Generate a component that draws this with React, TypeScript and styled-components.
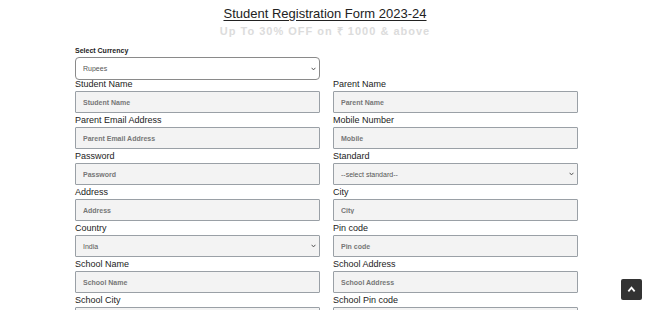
import React from "react";
import styled, { createGlobalStyle } from "styled-components";

const Global = createGlobalStyle`
  html, body { margin: 0; padding: 0; background: #fff; }
  body { font-family: "Liberation Sans", Arial, sans-serif; color: #222; }
`;

const Page = styled.div`
  padding-top: 6px;
`;

const Title = styled.h1`
  margin: 0;
  text-align: center;
  font-size: 13px;
  font-weight: 400;
  line-height: 15px;
  text-decoration: underline;
  text-underline-offset: 2px;
  color: #222;
`;

const Subtitle = styled.div`
  margin-top: 4px;
  text-align: center;
  font-size: 11px;
  line-height: 13px;
  font-weight: 700;
  letter-spacing: 1px;
  color: #dcdcdc;
`;

const Form = styled.form`
  margin: 8px 0 0 75px;
  width: 503px;
`;

const SmallLabel = styled.div`
  font-size: 7px;
  font-weight: 700;
  line-height: 9px;
  margin-bottom: 2px;
`;

const SelectWrap = styled.div`
  position: relative;
  width: 245px;
`;

const Chevron = styled.svg`
  position: absolute;
  right: 4px;
  top: 50%;
  margin-top: -2px;
  pointer-events: none;
`;

const CurrencySelect = styled.select`
  appearance: none;
  display: block;
  width: 245px;
  height: 23px;
  border: 1px solid #8a8a8a;
  border-radius: 4px;
  background: #fff;
  font-family: "Liberation Sans", Arial, sans-serif;
  font-size: 7px;
  color: #555;
  padding-left: 7px;
  box-sizing: border-box;
  outline: none;
`;

const Grid = styled.div`
  display: grid;
  grid-template-columns: 245px 245px;
  column-gap: 13px;
  row-gap: 3px;
`;

const Field = styled.div`
  display: flex;
  flex-direction: column;
`;

const Label = styled.label`
  font-size: 9px;
  line-height: 11px;
  height: 11px;
  color: #222;
  position: relative;
  top: -1px;
`;

const Input = styled.input`
  display: block;
  width: 245px;
  height: 22px;
  box-sizing: border-box;
  border: 1px solid #9aa0a6;
  border-radius: 1px;
  background: #f3f3f3;
  padding-left: 7px;
  font-family: "Liberation Sans", Arial, sans-serif;
  font-size: 7px;
  &::placeholder { color: #777; font-weight: 600; }
`;

const Select = styled.select`
  appearance: none;
  display: block;
  width: 245px;
  height: 22px;
  box-sizing: border-box;
  border: 1px solid #9aa0a6;
  border-radius: 1px;
  background: #f3f3f3;
  padding-left: 7px;
  font-family: "Liberation Sans", Arial, sans-serif;
  font-size: 7px;
  color: #555;
  outline: none;
`;

const TopButton = styled.button`
  position: fixed;
  right: 8px;
  bottom: 10px;
  width: 21px;
  height: 21px;
  border: none;
  border-radius: 2px;
  background: #333;
  display: flex;
  align-items: center;
  justify-content: center;
  padding: 0;
`;

type F = { label: string; placeholder?: string; options?: string[] };

const fields: F[] = [
  { label: "Student Name", placeholder: "Student Name" },
  { label: "Parent Name", placeholder: "Parent Name" },
  { label: "Parent Email Address", placeholder: "Parent Email Address" },
  { label: "Mobile Number", placeholder: "Mobile" },
  { label: "Password", placeholder: "Password" },
  { label: "Standard", options: ["--select standard--"] },
  { label: "Address", placeholder: "Address" },
  { label: "City", placeholder: "City" },
  { label: "Country", options: ["India"] },
  { label: "Pin code", placeholder: "Pin code" },
  { label: "School Name", placeholder: "School Name" },
  { label: "School Address", placeholder: "School Address" },
  { label: "School City", placeholder: "School City" },
  { label: "School Pin code", placeholder: "School Pin code" },
];

const Arrow = () => (
  <Chevron width="5" height="4" viewBox="0 0 5 4">
    <path d="M0.6 0.8 L2.5 2.9 L4.4 0.8" fill="none" stroke="#444" strokeWidth="0.9" />
  </Chevron>
);

export default function App() {
  return (
    <Page>
      <Global />
      <Title>Student Registration Form 2023-24</Title>
      <Subtitle>Up To 30% OFF on ₹ 1000 &amp; above</Subtitle>
      <Form onSubmit={(e) => e.preventDefault()}>
        <SmallLabel>Select Currency</SmallLabel>
        <SelectWrap>
          <CurrencySelect defaultValue="Rupees">
            <option>Rupees</option>
            <option>Dollars</option>
          </CurrencySelect>
          <Arrow />
        </SelectWrap>
        <Grid>
          {fields.map((f) => (
            <Field key={f.label}>
              <Label>{f.label}</Label>
              {f.options ? (
                <SelectWrap>
                  <Select defaultValue={f.options[0]}>
                    {f.options.map((o) => (
                      <option key={o}>{o}</option>
                    ))}
                  </Select>
                  <Arrow />
                </SelectWrap>
              ) : (
                <Input
                  type={f.label === "Password" ? "password" : "text"}
                  placeholder={f.placeholder}
                />
              )}
            </Field>
          ))}
        </Grid>
      </Form>
      <TopButton aria-label="Back to top">
        <svg width="9" height="9" viewBox="0 0 10 10">
          <path d="M1.5 7 L5 3 L8.5 7" fill="none" stroke="#fff" strokeWidth="2" />
        </svg>
      </TopButton>
    </Page>
  );
}
